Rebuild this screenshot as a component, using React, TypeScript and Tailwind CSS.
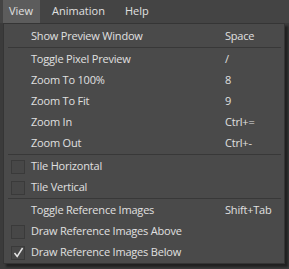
import React from "react";

type Item =
  | { kind: "sep" }
  | { kind: "item"; label: string; shortcut?: string; check?: "off" | "on" };

const items: Item[] = [
  { kind: "item", label: "Show Preview Window", shortcut: "Space" },
  { kind: "sep" },
  { kind: "item", label: "Toggle Pixel Preview", shortcut: "/" },
  { kind: "item", label: "Zoom To 100%", shortcut: "8" },
  { kind: "item", label: "Zoom To Fit", shortcut: "9" },
  { kind: "item", label: "Zoom In", shortcut: "Ctrl+=" },
  { kind: "item", label: "Zoom Out", shortcut: "Ctrl+-" },
  { kind: "sep" },
  { kind: "item", label: "Tile Horizontal", check: "off" },
  { kind: "item", label: "Tile Vertical", check: "off" },
  { kind: "sep" },
  { kind: "item", label: "Toggle Reference Images", shortcut: "Shift+Tab" },
  { kind: "item", label: "Draw Reference Images Above", check: "off" },
  { kind: "item", label: "Draw Reference Images Below", check: "on" },
];

function CheckBox({ on }: { on: boolean }) {
  return (
    <div className="w-[14px] h-[14px] border border-[#3a3a3a] bg-[#474747] flex items-center justify-center">
      {on && (
        <svg width="11" height="11" viewBox="0 0 11 11">
          <path d="M1.5 6 L4.2 9.5 L9.6 1" fill="none" stroke="#e4e4e4" strokeWidth="1.5" />
        </svg>
      )}
    </div>
  );
}

export default function App() {
  return (
    <div
      className="w-[289px] h-[269px] bg-[#3b3b3b] text-[#e0e0e0] text-[11px] tracking-[-0.2px] overflow-hidden"
      style={{ fontFamily: "'Open Sans', 'Liberation Sans', sans-serif" }}
    >
      <div className="h-[23px] bg-[#444444] flex items-stretch pl-[3px] tracking-normal">
        <div className="bg-[#5c5c5c] pl-[6px] pr-[7px] flex items-center">View</div>
        <div className="pl-[12px] pr-[8px] flex items-center">Animation</div>
        <div className="pl-[12px] pr-[8px] flex items-center">Help</div>
      </div>
      <div className="pl-[3px]">
        <div className="w-[282px] h-[241px] bg-[#4a4a4a] border border-[#353535] pt-[2px] shadow-[3px_3px_2px_rgba(0,0,0,0.45)]">
          {items.map((it, i) =>
            it.kind === "sep" ? (
              <div key={i} className="h-[2px] flex items-start pl-[4px] pr-[3px]">
                <div className="h-px w-full bg-[#383838]" />
              </div>
            ) : (
              <div key={i} className="h-[21px] flex items-center">
                <div className="w-[27px] pl-[7px] flex items-center">
                  {it.check && <CheckBox on={it.check === "on"} />}
                </div>
                <div className="w-[194px] whitespace-nowrap">{it.label}</div>
                <div className="whitespace-nowrap">{it.shortcut}</div>
              </div>
            )
          )}
        </div>
      </div>
    </div>
  );
}
